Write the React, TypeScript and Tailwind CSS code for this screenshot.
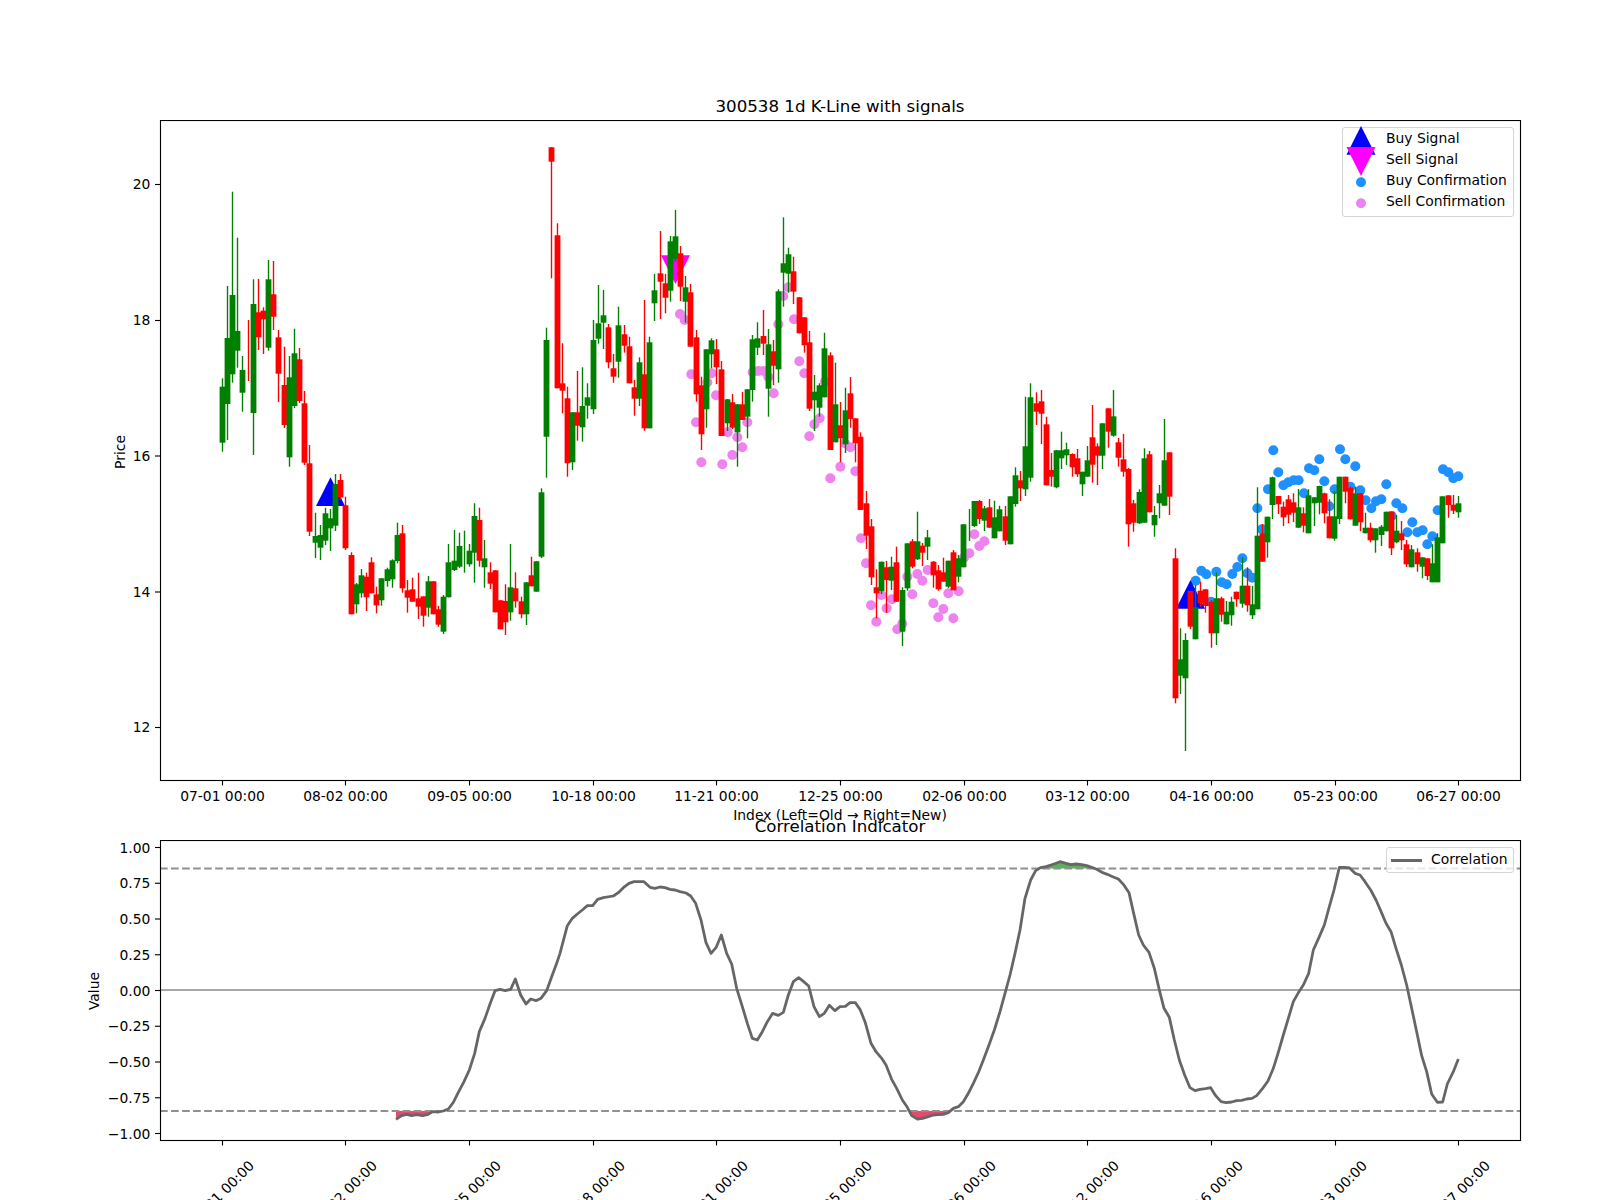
import React from 'react'

// [high, body top, body bottom, low, up] in page pixels, one row per session
// up = 1 is drawn green, 0 red. top === bottom means no visible body.
const candles: number[][] = [
  [378.3,386.7,442.7,451.7,1],[286,338,404,440,1],[191.7,295,374.3,382.7,1],[237.7,331,350.7,367.7,1],[356,370,392.7,411.7,1],
  [320,350,350,381,0],[279.3,304,413,455,1],[279,312.3,337.3,350,0],[307.3,310.7,319.3,354,0],[260,279.3,347.7,350.7,1],
  [261,294.3,316.7,330,0],[330,337.3,373.7,402,0],[346.7,385,425,428,0],[356,377.3,457.3,466.7,1],[328.7,353.3,406,408,1],
  [348,359.3,401,403,0],[391,403.3,462.7,465,0],[445,463.3,531.7,536,0],[512.7,536,542.7,558,1],[525,535,547.7,560,1],
  [507.7,513.3,540.7,545,1],[509,518.3,528.3,551,1],[474,484,525.7,531,1],[474,480,497.3,500,0],[496.7,505.3,548.3,550,0],
  [552.3,555,614.3,614.3,0],[583,584.3,604.3,613.3,1],[569,575.3,593.3,597.7,1],[572.7,576.7,597.3,611,0],[557.3,562.3,593.3,593.3,0],
  [586.7,594.3,605.3,613.3,0],[578,578.3,600.3,605.7,1],[567.7,569.3,581,586.7,1],[559.3,560.3,579.3,587.7,1],[522.7,535,561,563.3,1],
  [525,533.3,588.3,592.7,0],[580,590.3,597.7,612.7,0],[577.7,589.3,601.7,601.7,0],[572.7,598.3,606.7,619,0],[596.7,596.3,615.7,626.7,0],
  [576,581.3,607.7,616.7,1],[581,581.3,614.3,614.3,0],[606,609.3,624.7,626.7,0],[595,596.7,631.7,634,1],[544,562.3,597.3,597.3,1],
  [530,560.7,570,571,1],[532.7,546,566.7,568,1],[530.7,550,550,572.7,1],[544,550.7,564.3,566.7,1],[503.3,516,552.7,582.7,1],
  [507.7,520,560.7,566.7,0],[540,558.3,567.3,587.7,1],[562.3,572.3,583.7,589,0],[570,570.3,612.3,612.3,0],[600,600.3,629.3,629.3,0],
  [584.3,601,622.3,635,0],[544,587.3,612.3,620.7,1],[572.3,588.3,601.3,607.7,0],[596.7,601.3,614.3,618.3,0],[582,582.3,614.3,625,1],
  [556.7,575.3,586.3,586.3,0],[561,561.3,591.7,591.7,1],[488.3,492.3,556.7,558,1],[327.7,340,436.7,477.7,1],[147,147.3,161.7,278.3,0],
  [223.3,235.3,388.3,388.3,0],[343.3,383.3,390.7,413.3,0],[386.7,398.3,463.3,476.7,0],[412,412.3,462.3,470,1],[371,412.3,425.7,440.7,0],
  [367.3,406,427.3,441.7,1],[383.3,397.3,405.7,418.7,1],[320,340,409.3,414,1],[285,323.3,338.7,343.7,1],[290,315.3,322.7,349,1],
  [324,327.3,362.3,368.3,0],[354,368.3,376.7,382.7,0],[306.7,325.3,361.7,377.7,1],[325,334.3,345.7,352.7,0],[336.7,346.3,383.3,383.3,0],
  [380,387.3,398.7,415.7,0],[357.3,362.3,398.7,406,1],[300,374.3,428.3,430.7,0],[336.7,342.3,428.3,428.3,1],[274,290.3,303.3,321,1],
  [231,273.3,281.7,319,0],[274,283.3,297.7,313.3,0],[236,241.3,290.7,301.7,1],[210,236.3,259,261.7,1],[246,253.3,286.7,301,0],
  [276,287.3,301.7,322.7,1],[284,292.3,346.7,346.7,0],[330,337.3,394.3,401.7,0],[376.7,385.3,434.3,450,0],[349,349.3,409.3,427.7,1],
  [338.3,340.3,354.3,368.3,1],[339,349.3,367.3,384,0],[361,369.3,436,436,0],[399,399.3,423.3,431,1],[394,402.3,427.7,429,0],
  [404,404.3,432.3,466.7,1],[392,404.3,420,420,0],[389,389.3,416.7,438.3,1],[335,339.3,390,401.7,1],[322.3,338.3,347.7,355,1],
  [310,336,343.7,355,0],[329,344.3,388.7,416.7,1],[340,351.3,365.7,385,0],[289.3,291.3,369.3,382.7,1],[217.3,263.3,272.7,306.7,1],
  [247.7,254.3,273.7,292.7,1],[256.7,271.3,291.7,304,0],[297,297.3,333.3,333.3,0],[317,317.3,345.3,352.7,0],[331,342.3,408.7,411,0],
  [375,391.7,400.3,431,1],[383.3,385.3,407.7,416.7,1],[332.7,348.3,397.3,397.3,1],[352.3,355.3,450,450,0],[362.7,404.3,442.3,442.3,1],
  [402,425.3,438.3,462.3,0],[387.7,410.3,444.3,453,1],[377,393.3,419,427.7,0],[418.3,418.3,443.3,462.3,0],[432.3,436.7,510,510,0],
  [491,503.3,535.7,549,0],[519,526.3,577.3,585,0],[569.3,587.3,593.3,618.3,0],[561.7,561.7,591,594,1],[561,567.3,580,612.7,0],
  [556.7,566.7,580.7,590,1],[546.7,562.3,601.7,601.7,0],[587.3,590,631.7,646,1],[543.3,543.3,588.3,590.7,1],[539,541.3,566.7,568.3,0],
  [511.7,541.3,559.3,560,1],[543,545.7,552.7,566,0],[530,537.3,546.7,560,1],[561,561.7,575.3,587.7,0],[565,570.3,589.3,590.7,0],
  [557.7,572.3,581.7,581.7,0],[560.7,560.7,586.7,588,1],[550,552.3,590.3,590.3,0],[555,558.3,576.7,582.3,1],[524.3,524.3,567.3,567.3,1],
  [509,520,520,541,1],[501,501,526,527,1],[500,501,519,524,0],[506,508.3,520.7,531,1],[499,507.3,527.7,527.7,0],
  [500.7,517.3,538.3,538.3,1],[505.7,509.3,531.3,531.3,1],[506,516.3,540.7,545,0],[496.3,496.3,544.3,544.3,1],[467.3,475.3,504,506.7,1],
  [471,480.3,488.3,501,0],[396.7,446.3,489.3,496,1],[383.3,397.3,477.7,481.7,1],[392.3,403.3,411.7,425,0],[390,401.3,413.7,444,0],
  [416.7,424.3,485.3,485.3,0],[453,470,476.7,486.7,0],[450,450.3,487.3,488.3,1],[431.7,450.3,458.3,469,1],[442.7,449.3,455.3,465,1],
  [453.3,454,467.3,476.7,0],[449,458.3,474.3,477,0],[471.7,471.7,484.3,496,1],[446,460.3,476.7,476.7,1],[405,437.3,464.7,482.7,0],
  [443.3,446.3,455.7,485,0],[423.3,423.3,455.7,469,1],[408.3,408.3,431.7,447.7,0],[390,416.3,435.7,436.7,1],[438,442.3,457.7,466.7,0],
  [434,459.3,471.7,476.7,0],[468,469,524.3,546.7,0],[500,503.3,522.7,531.7,0],[489.3,492,523.3,524,1],[448.3,458.3,522.7,522.7,1],
  [451,454.3,512.3,512.3,0],[506,515,525.3,536.7,1],[485,493.3,503.3,518.3,1],[419,460.3,505.7,505.7,1],[452.3,452.3,496.7,515,0],
  [548.3,558.3,698.3,703.3,0],[628.3,659.3,675.7,694,1],[633.3,640,678.3,751,1],[591,591,626.7,629,0],[585,607.3,639.3,639.3,1],
  [581.7,590.7,603.3,606.7,0],[589.3,589.3,606,612.7,0],[600,601.7,633.3,647.7,0],[572.3,598.3,633.3,645,1],[596.7,598.3,614.7,621.7,0],
  [601,611.7,624.3,624.3,1],[596.7,601.7,615.3,625.7,1],[591.7,591.7,599.3,606.7,0],[557.3,585.7,603.7,607.7,1],[567.3,585.7,605.3,611.7,0],
  [586,604.3,615.3,619,1],[487.3,535.7,609.3,609.3,1],[524,533.3,561.7,561.7,0],[516.7,516.7,542.3,557.7,1],[476.7,477.3,505,519,1],
  [496,496,504.3,514,0],[501.7,506.7,517.3,526,0],[495,499.3,514.7,523.3,0],[493.3,502.3,512.7,522,0],[489,507.3,527.7,527.7,1],
  [507.3,513.3,525.7,532.3,0],[489.3,495.3,533.3,533.3,1],[497.3,497.3,503.3,526,1],[485.7,486,502.7,514.3,1],[492.7,493.3,513.3,523.3,0],
  [499.3,516.3,538.3,538.3,0],[491,516.3,538.7,540.7,1],[476.7,476.7,519,524,1],[476.7,476.7,491.7,503.3,0],[486.7,487.7,519.3,519.3,0],
  [486.7,493.3,525.7,525.7,1],[493.3,493.3,522.3,531,0],[512.7,527.7,533.3,533.3,1],[522.7,527.7,540.3,542.3,0],[528.3,528.3,540.3,552.7,1],
  [525,526.7,535,546,1],[511.7,511.7,531.3,531.3,1],[511.7,511.7,548.3,555,0],[515,530.7,542.3,543.3,1],[521,533.3,540.3,550,0],
  [540,544.3,564.3,567,0],[545,549.3,567.3,567.3,1],[548.3,552.3,564.3,571.7,0],[557.3,557.3,566.7,578.3,1],[558.3,558.3,576,580,0],
  [544.3,563.3,582.3,582.3,1],[533.3,537.3,582.3,582.3,1],[496.3,496.3,543.3,543.3,1],[495.3,495.3,505,517.7,0],[495,504.7,510.7,514,0],
  [496,503.3,512.3,517.7,1],
]

// sell confirmations, taken from crops at (530,130) and (830,370), 3x
const sellDots: number[][] = [
  ...[[450,552],[464,570],[484,733],[498,877],[514,997],[545,730],[532,757],[558,796],[577,1003],[593,907],[607,975],[622,922],[637,952],[652,877],[668,727],[685,723],[700,723],[715,741],[731,790],[745,583],[760,498],[775,472],[792,568],[808,694],[823,730],[838,919],[853,883],[869,865],[885,755],[901,1045],[931,1010],[945,940],[961,952],[976,1024]].map(([x, y]) => [530 + x / 3, 130 + y / 3]),
  ...[[93,505],[108,580],[123,706],[139,755],[154,675],[170,715],[186,688],[202,778],[217,761],[232,620],[247,673],[262,612],[277,632],[293,600],[310,700],[325,742],[340,717],[355,670],[370,745],[386,664],[402,563],[418,550],[433,493],[448,528],[463,514]].map(([x, y]) => [830 + x / 3, 370 + y / 3]),
]

const buyDots: number[][] = [[167,482],[184,452],[199,463],[213,545],[229,455],[245,487],[260,493],[277,462],[292,441],[307,415],[322,460],[337,473],[352,265],[366,328],[384,208],[400,91],[415,157],[430,196],[445,187],[461,181],[476,181],[492,220],[507,145],[523,151],[538,118],[553,184],[568,259],[584,208],[600,88],[616,118],[631,200],[646,139],[661,211],[677,241],[694,265],[708,244],[724,238],[739,193],[755,288],[769,250],[787,265],[802,337],[817,307],[832,337],[848,331],[862,373],[877,349],[893,271],[909,148],[925,157],[940,175],[955,169]].map(([x, y]) => [1140 + x / 3, 420 + y / 3])

const correlation: number[][] = [
  ...[[1008,1078],[1025,1067],[1040,1063],[1055,1067],[1070,1064],[1087,1067],[1103,1064],[1118,1055],[1135,1056],[1150,1053],[1165,1047],[1180,1027],[1195,997],[1212,965],[1228,930],[1244,880],[1258,815],[1275,775],[1290,732],[1305,692],[1320,688],[1336,692],[1352,688],[1366,657],[1382,705],[1398,732],[1412,717],[1428,722],[1443,715],[1460,692],[1475,650],[1490,610]].map(([x, y]) => [60 + x / 3, 760 + y / 3]),
  ...[[0,580],[22,497],[37,475],[52,462],[67,450],[82,437],[98,437],[113,418],[130,413],[160,408],[175,398],[190,383],[207,370],[222,365],[252,365],[270,382],[285,385],[300,381],[315,383],[330,388],[345,390],[360,395],[378,399],[392,408],[407,430],[423,480],[438,548],[453,580],[468,563],[484,525],[500,580],[515,612],[530,685],[547,740],[562,790],[577,835],[592,840],[607,815],[622,785],[638,760],[655,766],[670,757],[685,705],[700,665],[716,653],[731,665],[746,678],[762,740],[778,770],[793,760],[808,736],[825,752],[840,740],[856,739],[870,728],[886,728],[900,748],[915,785],[933,850],[948,875],[965,895],[978,915],[995,958],[1010,985],[1027,1020],[1042,1042],[1055,1067],[1072,1077],[1088,1075],[1105,1070],[1120,1065],[1135,1064],[1150,1063],[1165,1058],[1180,1045],[1195,1040],[1210,1025],[1225,1000],[1240,970],[1255,938],[1270,900],[1287,855],[1303,810],[1320,755],[1335,700],[1350,645],[1365,580],[1380,510],[1395,415],[1412,360],[1427,332],[1442,323],[1458,320],[1473,315],[1488,310]].map(([x, y]) => [560 + x / 3, 760 + y / 3]),
  ...[[60,305],[78,310],[93,314],[108,312],[125,314],[140,317],[155,322],[170,328],[186,337],[202,343],[218,350],[235,357],[250,373],[267,398],[281,460],[296,525],[310,555],[327,577],[343,625],[358,690],[372,745],[388,772],[403,840],[418,900],[434,945],[450,983],[465,992],[480,988],[497,986],[512,983],[527,1007],[543,1025],[558,1028],[575,1026],[590,1022],[605,1021],[620,1017],[636,1015],[650,1007],[668,985],[684,963],[700,925],[714,880],[730,825],[745,775],[760,725],[777,695],[790,675],[806,640],[820,570],[838,530],[853,495],[868,440],[882,390],[898,322],[913,322],[929,324],[945,340],[960,345],[975,365],[992,390],[1008,420],[1022,452],[1038,490],[1053,515],[1068,565],[1084,615],[1100,675],[1115,745],[1130,815],[1145,887],[1160,935],[1175,1002],[1192,1027],[1208,1026],[1222,972],[1240,935],[1255,897]].map(([x, y]) => [1040 + x / 3, 760 + y / 3]),
]

const dates = ['07-01 00:00', '08-02 00:00', '09-05 00:00', '10-18 00:00', '11-21 00:00', '12-25 00:00', '02-06 00:00', '03-12 00:00', '04-16 00:00', '05-23 00:00', '06-27 00:00']
const tickX = [222.5, 345.5, 469.5, 593.5, 716.5, 840.5, 964.5, 1087.5, 1211.5, 1335.5, 1458.5]
// matplotlib snaps wicks and bodies to the pixel grid
const candleX = (i: number) => Math.floor(222.3 + 5.15 * i) + 0.5

const HI = 868.5
const LO = 1111

function overThreshold(line: number[][], test: (y: number) => boolean, base: number) {
  const runs: number[][][] = []
  let run: number[][] = []
  line.forEach((p, i) => {
    if (test(p[1])) {
      if (!run.length && i > 0) run.push(line[i - 1])
      run.push(p)
    } else if (run.length) {
      run.push(p)
      runs.push(run)
      run = []
    }
  })
  // short runs sit under the line anyway
  return runs
    .filter((r) => r.length > 6)
    .map((r) => [...r, [r[r.length - 1][0], base], [r[0][0], base]].map((p) => p.join(',')).join(' '))
}

function Frame({ top, bottom }: { top: number; bottom: number }) {
  return (
    <>
      <rect x={160.5} y={top + 0.5} width={1360} height={bottom - top} fill="none" stroke="#000" strokeWidth={1.11} />
      {tickX.map((x) => (
        <line key={x} x1={x} x2={x} y1={bottom} y2={bottom + 5.5} stroke="#000" strokeWidth={1.11} />
      ))}
    </>
  )
}

function PriceChart() {
  return (
    <svg width={1600} height={705} viewBox="0 120 1600 705" className="block">
      {sellDots.map(([x, y], i) => <circle key={i} cx={x} cy={y} r={5} fill="#ee82ee" />)}
      {buyDots.map(([x, y], i) => <circle key={i} cx={x} cy={y} r={5} fill="#1e90ff" />)}
      <polygon points="330.5,477.3 316,506 345,506" fill="#0000ff" />
      <polygon points="1190.5,580 1176,608.7 1205,608.7" fill="#0000ff" />
      <polygon points="661,255.3 690,255.3 675.5,284" fill="#ff00ff" />
      {candles.map(([high, top, bottom, low, up], i) => {
        const color = up ? '#008000' : '#ff0000'
        const x = candleX(i)
        return (
          <g key={i}>
            <line x1={x} x2={x} y1={high} y2={low} stroke={color} strokeWidth={1.39} />
            {bottom > top && <rect x={x - 2.9} y={top} width={5.8} height={bottom - top} fill={color} />}
          </g>
        )
      })}
      <Frame top={120} bottom={780} />
      {[[20, 184.5], [18, 320.5], [16, 456], [14, 592], [12, 727.5]].map(([v, y]) => (
        <g key={v}>
          <line x1={155} x2={160} y1={y} y2={y} stroke="#000" strokeWidth={1.11} />
          <text x={150.3} y={y + 4.5} textAnchor="end" fontSize={13.89}>{v}</text>
        </g>
      ))}
      {dates.map((d, i) => (
        <text key={d} x={tickX[i]} y={800.7} textAnchor="middle" fontSize={13.89}>{d}</text>
      ))}
      <text x={840} y={820} textAnchor="middle" fontSize={13.89}>Index (Left=Old → Right=New)</text>
      <text transform="translate(125 452) rotate(-90)" textAnchor="middle" fontSize={13.89}>Price</text>
    </svg>
  )
}

function CorrelationChart() {
  const reds = overThreshold(correlation, (y) => y > LO, LO)
  const greens = overThreshold(correlation, (y) => y < HI, HI)
  return (
    <svg width={1600} height={360} viewBox="0 840 1600 360" className="block">
      {reds.map((p, i) => <polygon key={i} points={p} fill="#e8486c" />)}
      {greens.map((p, i) => <polygon key={i} points={p} fill="#58b35c" />)}
      <line x1={160} x2={1520} y1={990} y2={990} stroke="#a8a8a8" strokeWidth={2} />
      <line x1={160} x2={1520} y1={HI} y2={HI} stroke="#909090" strokeWidth={2.08} strokeDasharray="7.7 3.33" />
      <line x1={160} x2={1520} y1={LO} y2={LO} stroke="#909090" strokeWidth={2.08} strokeDasharray="7.7 3.33" />
      <polyline points={correlation.map((p) => p.join(',')).join(' ')} fill="none" stroke="#666" strokeWidth={2.78} strokeLinejoin="round" />
      <Frame top={840} bottom={1140} />
      {['1.00', '0.75', '0.50', '0.25', '0.00', '−0.25', '−0.50', '−0.75', '−1.00'].map((v, i) => {
        const y = 847.5 + i * 35.75
        return (
          <g key={v}>
            <line x1={155} x2={160} y1={y} y2={y} stroke="#000" strokeWidth={1.11} />
            <text x={150.3} y={y + 5} textAnchor="end" fontSize={13.89}>{v}</text>
          </g>
        )
      })}
      {dates.map((d, i) => (
        <text key={d} transform={`translate(${tickX[i] - 1} 1193) rotate(-45)`} y={5} textAnchor="middle" fontSize={13.89}>{d}</text>
      ))}
      <text transform="translate(99 991) rotate(-90)" textAnchor="middle" fontSize={13.89}>Value</text>
    </svg>
  )
}

function PriceLegend() {
  const rows = [
    { label: 'Buy Signal', marker: <polygon points="15,0 0.5,28.7 29.5,28.7" fill="#0000ff" /> },
    { label: 'Sell Signal', marker: <polygon points="0.5,21 29.5,21 15,50" fill="#ff00ff" /> },
    { label: 'Buy Confirmation', marker: <circle cx={15} cy={56.3} r={5} fill="#1e90ff" /> },
    { label: 'Sell Confirmation', marker: <circle cx={15} cy={77.3} r={5} fill="#ee82ee" /> },
  ]
  return (
    <div className="absolute left-[1342px] top-[127px] w-[172px] h-[90px] rounded-[3px] border border-[#d5d5d5] bg-white/80 pl-[43px] flex flex-col text-[13.89px] leading-[20.9px]">
      <svg width={30} height={80} viewBox="0 0 30 80" className="absolute left-[3px] top-[-2px] overflow-visible">
        {rows.map((r) => <g key={r.label}>{r.marker}</g>)}
      </svg>
      {rows.map((r) => <span key={r.label} className="whitespace-nowrap">{r.label}</span>)}
    </div>
  )
}

function CorrelationLegend() {
  return (
    <div className="absolute left-[1386px] top-[847px] w-[128px] h-[26px] rounded-[3px] border border-[#d5d5d5] bg-white/80 flex items-center pl-[4px] pb-[2px] gap-[9px] text-[13.89px]">
      <span className="w-[31px] h-[3px] mt-[2px] bg-[#666]" />
      <span>Correlation</span>
    </div>
  )
}

function Title({ text, className = '' }: { text: string; className?: string }) {
  return <div className={`h-[28px] pl-[160px] pr-[80px] text-center text-[16.67px] leading-[30px] ${className}`}>{text}</div>
}

export default function App() {
  return (
    <div className="relative w-[1600px] h-[1200px] overflow-hidden bg-white pt-[92px] text-black font-['DejaVu_Sans',sans-serif]">
      <Title text="300538 1d K-Line with signals" />
      <PriceChart />
      <Title text="Correlation Indicator" className="-mt-[13px]" />
      <CorrelationChart />
      <PriceLegend />
      <CorrelationLegend />
    </div>
  )
}
